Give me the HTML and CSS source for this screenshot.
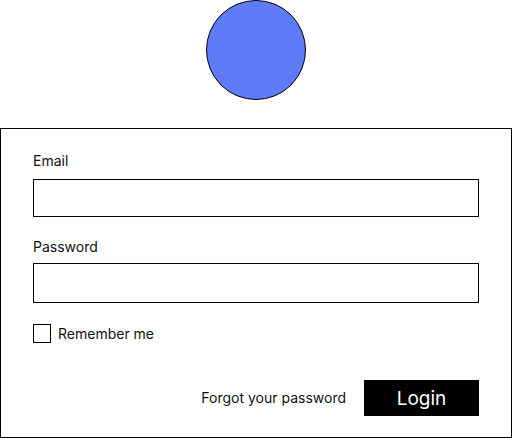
FILE: index.html
```html
<!DOCTYPE html>
<html>
<head>
<meta charset="utf-8">
<link rel="stylesheet" href="styles.css">
</head>
<body>
<div class="logo-wrap"><div class="logo"></div></div>
<form class="card">
  <label class="label label-email">Email</label>
  <div class="input input-email"></div>
  <label class="label label-pass">Password</label>
  <div class="input input-pass"></div>
  <div class="remember">
    <span class="checkbox"></span>
    <span class="remember-text">Remember me</span>
  </div>
  <div class="actions">
    <span class="forgot">Forgot your password</span>
    <span class="btn">Login</span>
  </div>
</form>
</body>
</html>
```
FILE: styles.css
```css
html, body {
  margin: 0;
  padding: 0;
  background: #fff;
  font-family: Inter, "Noto Sans", sans-serif;
  color: #111;
}
.logo-wrap {
  height: 128px;
  display: flex;
  justify-content: center;
}
.logo {
  width: 98px;
  height: 98px;
  border: 1px solid #000;
  border-radius: 50%;
  background: #5f7bf9;
}
.card {
  margin: 0;
  box-sizing: border-box;
  width: 512px;
  height: 310px;
  border: 1px solid #000;
  padding: 22px 32px 0 32px;
  display: flex;
  flex-direction: column;
}
.label {
  display: block;
  font-size: 14px;
  line-height: 20px;
}
.input {
  box-sizing: border-box;
  width: 446px;
  border: 1px solid #000;
}
.input-email {
  height: 38px;
  margin-top: 8px;
}
.label-pass {
  margin-top: 20px;
}
.input-pass {
  height: 40px;
  margin-top: 6px;
}
.remember {
  display: flex;
  align-items: center;
  margin-top: 21px;
  height: 19px;
}
.checkbox {
  box-sizing: border-box;
  width: 18px;
  height: 19px;
  border: 1px solid #000;
}
.remember-text {
  margin-left: 7px;
  font-size: 14px;
  line-height: 20px;
}
.actions {
  display: flex;
  justify-content: flex-end;
  align-items: center;
  width: 446px;
  margin-top: 37px;
}
.forgot {
  font-size: 14px;
  line-height: 20px;
  margin-right: 18px;
}
.btn {
  width: 115px;
  height: 36px;
  background: #000;
  color: #fff;
  font-size: 19px;
  display: flex;
  align-items: center;
  justify-content: center;
}
```
